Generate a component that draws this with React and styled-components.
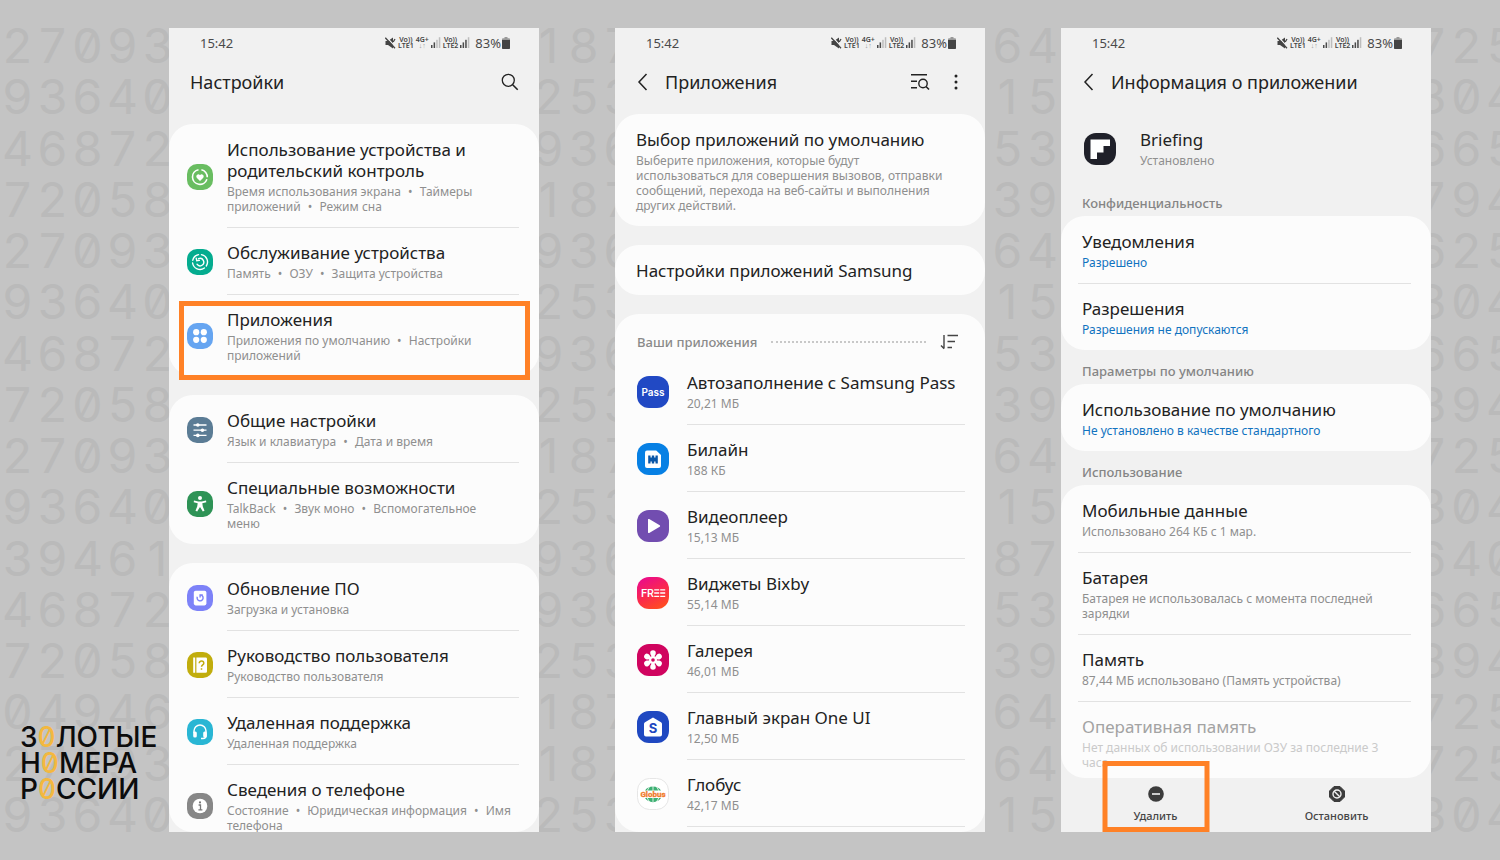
import React from 'react';
import styled, { createGlobalStyle } from 'styled-components';

const GlobalStyle = createGlobalStyle`
  * {
    box-sizing: border-box;
  }

  body {
    margin: 0;
    background: #c4c4c4;
    font-family: "Noto Sans", "Open Sans", sans-serif;
  }
`;

// Columns of digits between the phones, top to bottom
const DIGITS = [
  {
    shift: 0,
    rows: ['27093', '93640', '46872', '72058', '27093', '93640', '46872', '72058',
      '27093', '93640', '39461', '46872', '72058', '04946', '27093', '93640'],
  },
  {
    shift: -8,
    rows: ['187', '253', '936', '187', '936', '253', '936', '253',
      '187', '253', '936', '936', '253', '187', '187', '253'],
  },
  {
    shift: 5,
    rows: ['64', '15', '53', '39', '64', '15', '53', '39',
      '64', '15', '87', '53', '39', '64', '64', '15'],
  },
  {
    shift: -17,
    rows: ['725', '304', '665', '794', '625', '304', '665', '394',
      '725', '304', '640', '665', '394', '725', '725', '304'],
  },
];

// Icons of the settings list
const UsageIcon = () => (
  <SmallIcon viewBox="0 0 26 26">
    <rect width="26" height="26" rx="10" fill="#69bd61" />
    <path d="M11.5 5.7a7.4 7.4 0 1 0 8.4 9.6M14.4 5.7a7.4 7.4 0 0 1 5.9 7.6" fill="none" stroke="#fff" strokeWidth="1.6" />
    <path d="M13 17l-3.3-3.3a2 2 0 0 1 3.3-2.4 2 2 0 0 1 3.3 2.4z" fill="#fff" />
  </SmallIcon>
);

const CareIcon = () => (
  <SmallIcon viewBox="0 0 26 26">
    <rect width="26" height="26" rx="10" fill="#04ac8f" />
    <g fill="none" stroke="#fff" strokeWidth="1.4" strokeLinecap="round">
      <path d="M14.5 5.6a7.5 7.5 0 0 1 4.8 11.4M17.4 19a7.5 7.5 0 0 1-11.8-5M5.8 11.2A7.5 7.5 0 0 1 11.5 5.6" />
      <path d="M10 15.2a3.7 3.7 0 1 0 1.5-5.5M9.2 9.2l.6 2.6 2.6-.4" />
    </g>
  </SmallIcon>
);

const AppsIcon = () => (
  <SmallIcon viewBox="0 0 26 26">
    <rect width="26" height="26" rx="10" fill="#66a5f1" />
    <g fill="#fff">
      <circle cx="9.2" cy="9.2" r="3.1" />
      <circle cx="16.8" cy="9.2" r="3.1" />
      <circle cx="9.2" cy="16.8" r="3.1" />
      <circle cx="16.8" cy="16.8" r="3.1" />
    </g>
  </SmallIcon>
);

const GeneralIcon = () => (
  <SmallIcon viewBox="0 0 26 26">
    <rect width="26" height="26" rx="10" fill="#5b7c95" />
    <path d="M6.5 8h13M6.5 13.2h13M6.5 18.4h13" stroke="#fff" strokeWidth="1.3" />
    <g fill="#fff">
      <circle cx="10.8" cy="8" r="1.8" />
      <circle cx="15.4" cy="13.2" r="1.8" />
      <circle cx="10.8" cy="18.4" r="1.8" />
    </g>
  </SmallIcon>
);

const AccessIcon = () => (
  <SmallIcon viewBox="0 0 26 26">
    <rect width="26" height="26" rx="10" fill="#2e9356" />
    <circle cx="13" cy="7" r="2" fill="#fff" />
    <path d="M7 9.6l4.2.8h3.6l4.2-.8.3 1.6-4 1.1.5 3.2 1.7 4.2-1.7.7-2.8-4.5-2.8 4.5-1.7-.7 1.7-4.2.5-3.2-4-1.1z" fill="#fff" />
  </SmallIcon>
);

const UpdateIcon = () => (
  <SmallIcon viewBox="0 0 26 26">
    <rect width="26" height="26" rx="10" fill="#7d82f8" />
    <rect x="6.8" y="5.8" width="12.6" height="14.6" rx="1.8" fill="#fff" />
    <path d="M10.3 11.8a3 3 0 1 0 3-1.9M15.8 9.9h-2.7v2.7" fill="none" stroke="#7d82f8" strokeWidth="1.4" />
  </SmallIcon>
);

const ManualIcon = () => (
  <SmallIcon viewBox="0 0 26 26">
    <rect width="26" height="26" rx="10" fill="#c1ad0d" />
    <path d="M6.2 5.4h2v15.4h-2zM9.4 5.4h9.2a1.4 1.4 0 0 1 1.4 1.4v12.6a1.4 1.4 0 0 1-1.4 1.4H9.4z" fill="#fff" />
    <path d="M12.2 11.2c0-2.9 4.6-2.7 4.6 0 0 1.8-2.3 1.7-2.3 3.6M14.5 16.2v1.6" fill="none" stroke="#c1ad0d" strokeWidth="1.5" />
  </SmallIcon>
);

const SupportIcon = () => (
  <SmallIcon viewBox="0 0 26 26">
    <rect width="26" height="26" rx="10" fill="#29b6d4" />
    <path d="M7 14v-2a6 6 0 0 1 12 0v4.5a3 3 0 0 1-3 3h-2" fill="none" stroke="#fff" strokeWidth="1.5" />
    <rect x="6.2" y="12.5" width="3.6" height="6" rx="1.5" fill="#fff" />
    <rect x="16.2" y="12.5" width="3.6" height="6" rx="1.5" fill="#fff" />
  </SmallIcon>
);

const AboutIcon = () => (
  <SmallIcon viewBox="0 0 26 26">
    <rect width="26" height="26" rx="10" fill="#878787" />
    <circle cx="13" cy="13" r="7.3" fill="#fff" />
    <path d="M11.6 12h1.9v4.8M11.4 16.8h4" fill="none" stroke="#777" strokeWidth="1.3" />
    <circle cx="13" cy="9.4" r="1.1" fill="#777" />
  </SmallIcon>
);

// Icons of the installed apps
const PassIcon = () => (
  <LargeIcon viewBox="0 0 32 32">
    <rect width="32" height="32" rx="12" fill="#2149c4" />
    <text x="16" y="20" textAnchor="middle" fontFamily="Inter" fontSize="10" fontWeight="600" fill="#fff">Pass</text>
  </LargeIcon>
);

const SimIcon = () => (
  <LargeIcon viewBox="0 0 32 32">
    <rect width="32" height="32" rx="12" fill="#0780e4" />
    <path d="M10 7.5h9.2l4.8 4.5v11a2 2 0 0 1-2 2H10a2 2 0 0 1-2-2V9.5a2 2 0 0 1 2-2z" fill="#fff" />
    <path d="M11.2 12.5h2.3v2h1.3v-2h2.4v2h1.3v-2h2.3v8h-2.3v-2h-1.3v2h-2.4v-2h-1.3v2h-2.3z" fill="#0b57a8" />
  </LargeIcon>
);

const VideoIcon = () => (
  <LargeIcon viewBox="0 0 32 32">
    <rect width="32" height="32" rx="12" fill="#724db0" />
    <path d="M11 9.8v12.4a.8.8 0 0 0 1.2.7l10.5-6.2a.8.8 0 0 0 0-1.4l-10.5-6.2a.8.8 0 0 0-1.2.7z" fill="#fff" />
  </LargeIcon>
);

const FreeIcon = () => (
  <LargeIcon viewBox="0 0 32 32">
    <defs>
      <linearGradient id="free" x1="0.2" y1="0" x2="0.7" y2="1">
        <stop offset="0" stopColor="#ea0a8c" />
        <stop offset="0.55" stopColor="#fb2a4c" />
        <stop offset="1" stopColor="#ff4d20" />
      </linearGradient>
    </defs>
    <rect width="32" height="32" rx="12" fill="url(#free)" />
    <text x="4" y="20" fontFamily="Roboto" fontSize="11" fontWeight="500" fill="#fff">FR</text>
    <path d="M17.2 12.8h5M17.2 16h5M17.2 19.3h5M23.2 12.8h5M23.2 16h5M23.2 19.3h5" stroke="#fff" strokeWidth="1.3" />
  </LargeIcon>
);

const GalleryIcon = () => (
  <LargeIcon viewBox="0 0 32 32">
    <rect width="32" height="32" rx="12" fill="#d0045f" />
    <g fill="#fff">
      {[0, 60, 120, 180, 240, 300].map((angle) => (
        <path key={angle} d="M16 14.5c-1-2-2.800-3.500-2.800-5.500a2.800 2.800 0 0 1 5.600 0c0 2-1.800 3.500-2.800 5.500z" transform={`rotate(${angle} 16 16)`} />
      ))}
      <circle cx="16" cy="16" r="4" />
    </g>
    <circle cx="16" cy="16" r="1.8" fill="#d0045f" />
  </LargeIcon>
);

const HomeIcon = () => (
  <LargeIcon viewBox="0 0 32 32">
    <rect width="32" height="32" rx="12" fill="#1f48c1" />
    <path d="M16 6.5l8 4.8a2 2 0 0 1 1 1.7v10.5a2 2 0 0 1-2 2H9a2 2 0 0 1-2-2V13a2 2 0 0 1 1-1.7z" fill="#fff" />
    <text x="16" y="22" textAnchor="middle" fontFamily="Inter" fontSize="13" fontWeight="700" fill="#1f48c1">S</text>
  </LargeIcon>
);

const GlobusIcon = () => (
  <LargeIcon viewBox="0 0 32 32">
    <rect x="0.5" y="0.5" width="31" height="31" rx="12" fill="#fff" stroke="#e6e6e6" />
    <path d="M8 12.5c3-5.5 13-5.5 16 0zM8 20c3 5.5 13 5.5 16 0z" fill="#3db072" />
    <path d="M16 8v16M12.5 8.5L10 13M19.5 8.5L22 13M10 19.5l2.5 4.5M22 19.500L19.500 24" stroke="#fff" strokeWidth=".8" />
    <text x="16" y="19" textAnchor="middle" fontFamily="Roboto" fontSize="8" fontWeight="700" fill="#f07a2a" stroke="#f07a2a" strokeWidth=".3">Globus</text>
  </LargeIcon>
);

const BriefingIcon = () => (
  <LargeIcon viewBox="0 0 32 32">
    <rect width="32" height="32" rx="12" fill="#1f2029" />
    <path d="M6.5 6.5H26V13h-6.5v6.5H13V26H6.500z" fill="#fff" />
  </LargeIcon>
);

const SETTINGS = [
  [
    { icon: UsageIcon, title: 'Использование устройства и родительский контроль', sub: ['Время использования экрана', 'Таймеры приложений', 'Режим сна'] },
    { icon: CareIcon, title: 'Обслуживание устройства', sub: ['Память', 'ОЗУ', 'Защита устройства'] },
    { icon: AppsIcon, title: 'Приложения', sub: ['Приложения по умолчанию', 'Настройки приложений'], marked: true },
  ],
  [
    { icon: GeneralIcon, title: 'Общие настройки', sub: ['Язык и клавиатура', 'Дата и время'] },
    { icon: AccessIcon, title: 'Специальные возможности', sub: ['TalkBack', 'Звук моно', 'Вспомогательное\nменю'] },
  ],
  [
    { icon: UpdateIcon, title: 'Обновление ПО', sub: ['Загрузка и установка'] },
    { icon: ManualIcon, title: 'Руководство пользователя', sub: ['Руководство пользователя'] },
    { icon: SupportIcon, title: 'Удаленная поддержка', sub: ['Удаленная поддержка'] },
    { icon: AboutIcon, title: 'Сведения о телефоне', sub: ['Состояние', 'Юридическая информация', 'Имя\nтелефона'] },
  ],
];

const APPS = [
  { icon: PassIcon, title: 'Автозаполнение с Samsung Pass', size: '20,21 МБ' },
  { icon: SimIcon, title: 'Билайн', size: '188 КБ' },
  { icon: VideoIcon, title: 'Видеоплеер', size: '15,13 МБ' },
  { icon: FreeIcon, title: 'Виджеты Bixby', size: '55,14 МБ' },
  { icon: GalleryIcon, title: 'Галерея', size: '46,01 МБ' },
  { icon: HomeIcon, title: 'Главный экран One UI', size: '12,50 МБ' },
  { icon: GlobusIcon, title: 'Глобус', size: '42,17 МБ' },
];

const INFO = [
  {
    label: 'Конфиденциальность',
    rows: [
      { title: 'Уведомления', sub: 'Разрешено', link: true },
      { title: 'Разрешения', sub: 'Разрешения не допускаются', link: true },
    ],
  },
  {
    label: 'Параметры по умолчанию',
    rows: [
      { title: 'Использование по умолчанию', sub: 'Не установлено в качестве стандартного', link: true },
    ],
  },
  {
    label: 'Использование',
    rows: [
      { title: 'Мобильные данные', sub: 'Использовано 264 КБ с 1 мар.' },
      { title: 'Батарея', sub: 'Батарея не использовалась с момента последней зарядки' },
      { title: 'Память', sub: '87,44 МБ использовано (Память устройства)' },
      { title: 'Оперативная память', sub: 'Нет данных об использовании ОЗУ за последние 3 часа', disabled: true },
    ],
  },
];

const Digits = ({ column, children }) => (
  <Strip>
    {column.rows.map((row, i) => (
      <DigitRow key={i} $shift={column.shift}>
        {row.split('').map((digit, j) => <Digit key={j}>{digit}</Digit>)}
      </DigitRow>
    ))}
    {children}
  </Strip>
);

const Signal = ({ level }) => (
  <svg width="10" height="11" viewBox="0 0 10 11">
    {[0, 1, 2, 3].map((i) => (
      <rect key={i} x={i * 2.6} y={8 - i * 2.6} width="1.5" height={3 + i * 2.6} fill={i < level ? '#4a4a4a' : '#bdbdbd'} />
    ))}
  </svg>
);

const Status = () => (
  <StatusBar>
    <span>15:42</span>
    <StatusIcons>
      <svg width="11" height="12" viewBox="0 0 11 12">
        <path d="M.5 4H3L8 .5v11L3 8H.5z" fill="#444" />
        <path d="M1.5 0L11 10.5" stroke="#f1f1f1" strokeWidth="1.2" />
        <path d="M.3.8L10 11.200M10 2L8.200 5" stroke="#444" strokeWidth="1.3" />
      </svg>
      <Network>
        <span>Vo))</span>
        <span>LTE1</span>
      </Network>
      <Network>
        <span>4G+</span>
        <Faint>↓↑</Faint>
      </Network>
      <Signal level={2} />
      <Network>
        <span>Vo))</span>
        <span>LTE2</span>
      </Network>
      <Signal level={3} />
      <Percent>83%</Percent>
      <svg width="8" height="12" viewBox="0 0 8 12">
        <path d="M2.5 0h3v1.2H7A1 1 0 0 1 8 2.200V11a1 1 0 0 1-1 1H1a1 1 0 0 1-1-1V2.200a1 1 0 0 1 1-1h1.500z" fill="#9a9a9a" />
        <path d="M0 3h8v8a1 1 0 0 1-1 1H1a1 1 0 0 1-1-1z" fill="#444" />
      </svg>
    </StatusIcons>
  </StatusBar>
);

const BackButton = () => (
  <Back type="button" aria-label="Назад">
    <svg width="12" height="18" viewBox="0 0 12 18">
      <path d="M10.5 1L3 9l7.5 8" fill="none" stroke="#222" strokeWidth="1.5" />
    </svg>
  </Back>
);

const SettingsPhone = () => (
  <Phone>
    <Status />
    <TitleBar>
      <Title>Настройки</Title>
      <IconButton type="button" aria-label="Поиск">
        <svg width="18" height="18" viewBox="0 0 18 18">
          <circle cx="7.3" cy="7.3" r="6" fill="none" stroke="#222" strokeWidth="1.3" />
          <path d="M11.7 11.7l5 5" stroke="#222" strokeWidth="1.6" />
        </svg>
      </IconButton>
    </TitleBar>
    <Body $top={17} $gap={19}>
      {SETTINGS.map((group, i) => (
        <Card key={i}>
          {group.map((row, j) => (
            <React.Fragment key={row.title}>
              {j > 0 && <Divider $left={58} />}
              <SettingRow type="button">
                <row.icon />
                <span>
                  <RowTitle>{row.title}</RowTitle>
                  <RowSub>
                    {row.sub.map((part, k) => (
                      <React.Fragment key={part}>
                        {k > 0 && <Bullet> • </Bullet>}
                        {part}
                      </React.Fragment>
                    ))}
                  </RowSub>
                </span>
                {row.marked && <RowMark />}
              </SettingRow>
            </React.Fragment>
          ))}
        </Card>
      ))}
    </Body>
  </Phone>
);

const AppsPhone = () => (
  <Phone>
    <Status />
    <TitleBar>
      <BackButton />
      <Title>Приложения</Title>
      <IconButton type="button" aria-label="Поиск в списке">
        <svg width="20" height="18" viewBox="0 0 20 18">
          <path d="M1 1.8h16M1 8.3h6M1 14.8h6" stroke="#222" strokeWidth="1.4" />
          <circle cx="13" cy="10.5" r="4.2" fill="none" stroke="#222" strokeWidth="1.4" />
          <path d="M16 13.5l3 3" stroke="#222" strokeWidth="1.6" />
        </svg>
      </IconButton>
      <IconButton type="button" aria-label="Ещё">
        <svg width="18" height="18" viewBox="0 0 18 18" fill="#222">
          <circle cx="9" cy="3" r="1.5" />
          <circle cx="9" cy="9" r="1.5" />
          <circle cx="9" cy="15" r="1.5" />
        </svg>
      </IconButton>
    </TitleBar>
    <Body $top={7} $gap={19}>
      <Card>
        <TextRow type="button">
          <RowTitle>Выбор приложений по умолчанию</RowTitle>
          <RowSub>
            Выберите приложения, которые будут использоваться для совершения вызовов,
            {' '}
            отправки сообщений, перехода на веб-сайты и выполнения других действий.
          </RowSub>
        </TextRow>
      </Card>
      <Card>
        <TextRow type="button">
          <RowTitle>Настройки приложений Samsung</RowTitle>
        </TextRow>
      </Card>
      <Card>
        <ListHead>
          <ListName>Ваши приложения</ListName>
          <Dots />
          <SortButton type="button" aria-label="Сортировка">
            <svg width="19" height="16" viewBox="0 0 19 16">
              <path d="M4 1v13.5M4.2 14.8L1 11.5M7.5 1.5H18M7.5 7.5H15M7.5 13.5H12" fill="none" stroke="#444" strokeWidth="1.4" />
            </svg>
          </SortButton>
        </ListHead>
        {APPS.map((app) => (
          <React.Fragment key={app.title}>
            <AppRow type="button">
              <app.icon />
              <span>
                <RowTitle>{app.title}</RowTitle>
                <RowSub>{app.size}</RowSub>
              </span>
            </AppRow>
            <Divider $left={72} />
          </React.Fragment>
        ))}
        <ListEnd />
      </Card>
    </Body>
  </Phone>
);

const InfoPhone = () => (
  <Phone>
    <Status />
    <TitleBar>
      <BackButton />
      <Title>Информация о приложении</Title>
    </TitleBar>
    <Body>
      <AppHead>
        <BriefingIcon />
        <span>
          <RowTitle>Briefing</RowTitle>
          <RowSub>Установлено</RowSub>
        </span>
      </AppHead>
      {INFO.map((section) => (
        <React.Fragment key={section.label}>
          <SectionLabel>{section.label}</SectionLabel>
          <Card>
            {section.rows.map((row, i) => (
              <React.Fragment key={row.title}>
                {i > 0 && <Divider $left={17} />}
                <TextRow type="button" disabled={row.disabled}>
                  <RowTitle>{row.title}</RowTitle>
                  <RowSub $link={row.link}>{row.sub}</RowSub>
                </TextRow>
              </React.Fragment>
            ))}
          </Card>
        </React.Fragment>
      ))}
    </Body>
    <BottomBar>
      <Action type="button">
        <svg width="16" height="16" viewBox="0 0 16 16">
          <circle cx="8" cy="8" r="7.8" fill="#3c3c3c" />
          <path d="M4 8h8" stroke="#f1f1f1" strokeWidth="1.6" />
        </svg>
        Удалить
        <ActionMark />
      </Action>
      <Action type="button">
        <svg width="16" height="16" viewBox="0 0 16 16">
          <path d="M5 .5h6L15.5 5v6L11 15.5H5L.5 11V5z" fill="#3c3c3c" stroke="#3c3c3c" strokeLinejoin="round" />
          <circle cx="8" cy="8" r="4" fill="none" stroke="#f1f1f1" strokeWidth="1.4" />
          <path d="M5.2 5.2l5.6 5.6" stroke="#f1f1f1" strokeWidth="1.4" />
        </svg>
        Остановить
      </Action>
    </BottomBar>
  </Phone>
);

const App = () => (
  <Page>
    <GlobalStyle />
    <Digits column={DIGITS[0]}>
      <Logo>
        <span>З<Zero>0</Zero>ЛОТЫЕ</span>
        <span>Н<Zero>0</Zero>МЕРА</span>
        <span>Р<Zero>0</Zero>ССИИ</span>
      </Logo>
    </Digits>
    <SettingsPhone />
    <Digits column={DIGITS[1]} />
    <AppsPhone />
    <Digits column={DIGITS[2]} />
    <InfoPhone />
    <Digits column={DIGITS[3]} />
  </Page>
);

// Page and backdrop
const Page = styled.main`
  display: grid;
  grid-template-columns:
    minmax(0, 169fr) minmax(0, 370fr) minmax(0, 76fr) minmax(0, 370fr)
    minmax(0, 76fr) minmax(0, 370fr) minmax(0, 69fr);
  height: 100vh;
  padding: 28px 0;
`;

const Strip = styled.div`
  position: relative;
  display: flex;
  flex-direction: column;
  justify-content: space-between;
  min-height: 0;
  overflow: hidden;
`;

const DigitRow = styled.div`
  display: flex;
  margin-left: ${(props) => props.$shift}px;
  height: 35px;
  line-height: 35px;
  color: #bababa;
  font-family: Inter, sans-serif;
  font-size: 48px;
  font-feature-settings: "zero";
`;

const Digit = styled.span`
  flex: none;
  width: 35px;
  text-align: center;
`;

const Logo = styled.div`
  position: absolute;
  left: 20px;
  bottom: 30px;
  display: flex;
  flex-direction: column;
  color: #0c0c0c;
  font-family: Inter, sans-serif;
  font-size: 28px;
  font-weight: 500;
  line-height: 26px;
  font-feature-settings: "zero";
  white-space: nowrap;
`;

const Zero = styled.span`
  color: #f3b83f;
`;

// Phone frame
const Phone = styled.section`
  display: flex;
  flex-direction: column;
  min-width: 0;
  min-height: 0;
  overflow: hidden;
  background: #f1f1f1;
`;

const StatusBar = styled.div`
  display: flex;
  flex: none;
  align-items: center;
  justify-content: space-between;
  height: 29px;
  padding: 0 29px 0 31px;
  color: #4a4a4a;
  font-size: 13px;
`;

const StatusIcons = styled.div`
  display: flex;
  align-items: center;
  gap: 2px;
`;

const Network = styled.span`
  display: flex;
  flex-direction: column;
  align-items: center;
  color: #444;
  font-size: 7px;
  font-weight: 600;
  line-height: 6px;
`;

const Faint = styled.span`
  color: #999;
`;

const Percent = styled.span`
  margin: 0 -1px 0 3px;
`;

const TitleBar = styled.header`
  display: flex;
  flex: none;
  align-items: center;
  gap: 17px;
  height: 50px;
  padding: 0 20px 0 21px;
`;

const Title = styled.h1`
  flex: 1;
  margin: 0;
  color: #222;
  font-size: 18px;
  font-weight: 400;
  line-height: 24px;
  white-space: nowrap;
`;

const IconButton = styled.button`
  display: flex;
  padding: 0;
  border: 0;
  background: none;
  cursor: pointer;
`;

const Back = styled(IconButton)`
  width: 12px;
`;

const SortButton = styled(IconButton)`
  flex: none;
`;

const Body = styled.div`
  display: flex;
  flex: 1;
  flex-direction: column;
  gap: ${(props) => props.$gap || 0}px;
  min-height: 0;
  padding-top: ${(props) => props.$top || 0}px;
  overflow: hidden;
  border-radius: 0 0 24px 24px;
`;

const Card = styled.div`
  flex: none;
  padding-top: 1px;
  border-radius: 24px;
  background: #fcfcfc;
`;

const Divider = styled.hr`
  height: 1px;
  margin: 0 20px 0 ${(props) => props.$left}px;
  border: 0;
  background: #e2e2e2;
`;

// Rows
const Row = styled.button`
  position: relative;
  width: 100%;
  border: 0;
  background: none;
  color: #222;
  font-family: inherit;
  text-align: left;
  cursor: pointer;
`;

const SettingRow = styled(Row)`
  display: flex;
  align-items: center;
  gap: 14px;
  padding: 14px 20px 13px 18px;
`;

const AppRow = styled(Row)`
  display: flex;
  align-items: center;
  gap: 18px;
  padding: 14px 20px 13px 22px;
`;

const RowTitle = styled.span`
  display: block;
  font-size: 17px;
  line-height: 21px;
`;

const RowSub = styled.span`
  display: block;
  margin-top: 3px;
  color: ${(props) => (props.$link ? '#1173c0' : '#8f8f8f')};
  font-size: 12px;
  line-height: 15px;
  white-space: pre-line;
`;

const TextRow = styled(Row)`
  display: block;
  padding: 14px 36px 14px 21px;

  ${RowSub} {
    margin-bottom: -1px;
  }

  &:disabled {
    color: #a3a3a3;
    cursor: default;
  }

  &:disabled ${RowSub} {
    color: #cacaca;
  }
`;

const Bullet = styled.span`
  margin: 0 4px;
`;

const SmallIcon = styled.svg`
  flex: none;
  width: 26px;
  height: 26px;
`;

const LargeIcon = styled.svg`
  flex: none;
  width: 32px;
  height: 32px;
`;

const ListHead = styled.div`
  display: flex;
  align-items: center;
  gap: 14px;
  height: 43px;
  padding: 10px 26px 0 22px;
`;

const ListName = styled.h2`
  margin: 0;
  color: #8a8a8a;
  font-size: 13px;
  font-weight: 500;
`;

const ListEnd = styled.div`
  height: 40px;
`;

const Dots = styled.span`
  flex: 1;
  border-top: 2px dotted #c8c8c8;
`;

const AppHead = styled.div`
  display: flex;
  flex: none;
  align-items: center;
  gap: 24px;
  padding: 22px 23px 14px;
  color: #222;
`;

const SectionLabel = styled.h2`
  flex: none;
  margin: 0;
  padding: 12px 21px 4px;
  color: #858585;
  font-size: 13px;
  font-weight: 500;
  line-height: 18px;
`;

const BottomBar = styled.footer`
  display: flex;
  flex: none;
  height: 54px;
  padding: 0 4px;
`;

const Action = styled.button`
  position: relative;
  display: flex;
  flex: 1;
  flex-direction: column;
  align-items: center;
  gap: 6px;
  padding: 8px 0 0;
  border: 0;
  background: none;
  color: #444;
  font-family: inherit;
  font-size: 11px;
  font-weight: 500;
  line-height: 16px;
  cursor: pointer;
`;

// Orange frames that point at a step
const Mark = styled.span`
  position: absolute;
  border: 5px solid #ff8126;
  pointer-events: none;
`;

const RowMark = styled(Mark)`
  top: 6px;
  right: 9px;
  bottom: -4px;
  left: 10px;
`;

const ActionMark = styled(Mark)`
  bottom: 0;
  left: 50%;
  width: 107px;
  height: 71px;
  transform: translateX(-50%);
`;

export default App;
